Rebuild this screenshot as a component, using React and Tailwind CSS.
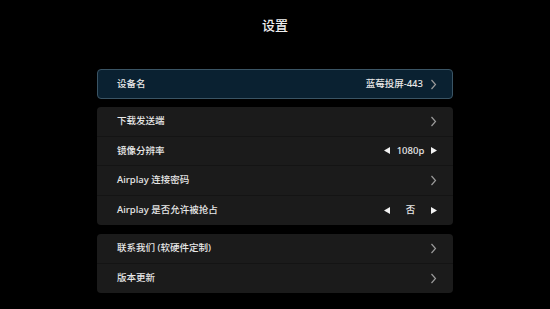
import React from 'react';

const Chevron = () => (
  <svg width="7" height="11" viewBox="0 0 7 11" className="text-[#9a9a9a]">
    <path d="M1.5 1 L5.5 5.5 L1.5 10" fill="none" stroke="currentColor" strokeWidth="1.2" />
  </svg>
);

const TriLeft = () => (
  <svg width="6" height="7" viewBox="0 0 6 7"><path d="M6 0 L0 3.5 L6 7 Z" fill="#f2f2f2" /></svg>
);
const TriRight = () => (
  <svg width="6" height="7" viewBox="0 0 6 7"><path d="M0 0 L6 3.5 L0 7 Z" fill="#f2f2f2" /></svg>
);

const Row = ({ label, children, last }) => (
  <div className={`h-[29.5px] flex items-center justify-between pl-[20px] pr-[16px] ${last ? '' : 'border-b border-[#141414]'}`}>
    <span className="text-[#e8e8e8] font-medium">{label}</span>
    <div className="flex items-center">{children}</div>
  </div>
);

const Picker = ({ value }) => (
  <div className="flex items-center">
    <TriLeft />
    <span className="w-[41px] text-center text-[#e8e8e8] font-medium">{value}</span>
    <TriRight />
  </div>
);

export default function App() {
  return (
    <div
      className="w-[550px] h-[309px] bg-black flex flex-col items-center text-[9.5px]"
      style={{ fontFamily: '"Noto Sans", "Noto Sans CJK SC", sans-serif' }}
    >
      <div className="pt-[14px] h-[69px] text-[13px] text-[#f0f0f0] leading-[22px] font-medium">设置</div>

      <div className="w-[356px] flex flex-col">
        <div className="h-[30px] rounded-[4px] border border-[#3a5464] bg-[#0a2131] flex items-center justify-between pl-[19px] pr-[15px]">
          <span className="text-[#e8e8e8] font-medium">设备名</span>
          <div className="flex items-center gap-[7px]">
            <span className="text-[#e8e8e8] font-medium">蓝莓投屏-443</span>
            <Chevron />
          </div>
        </div>

        <div className="mt-[8px] rounded-[4px] bg-[#1b1b1b]">
          <Row label="下载发送端"><Chevron /></Row>
          <Row label="镜像分辨率"><Picker value="1080p" /></Row>
          <Row label="Airplay 连接密码"><Chevron /></Row>
          <Row label="Airplay 是否允许被抢占" last><Picker value="否" /></Row>
        </div>

        <div className="mt-[9px] rounded-[4px] bg-[#1b1b1b]">
          <Row label="联系我们 (软硬件定制)"><Chevron /></Row>
          <Row label="版本更新" last><Chevron /></Row>
        </div>
      </div>
    </div>
  );
}
